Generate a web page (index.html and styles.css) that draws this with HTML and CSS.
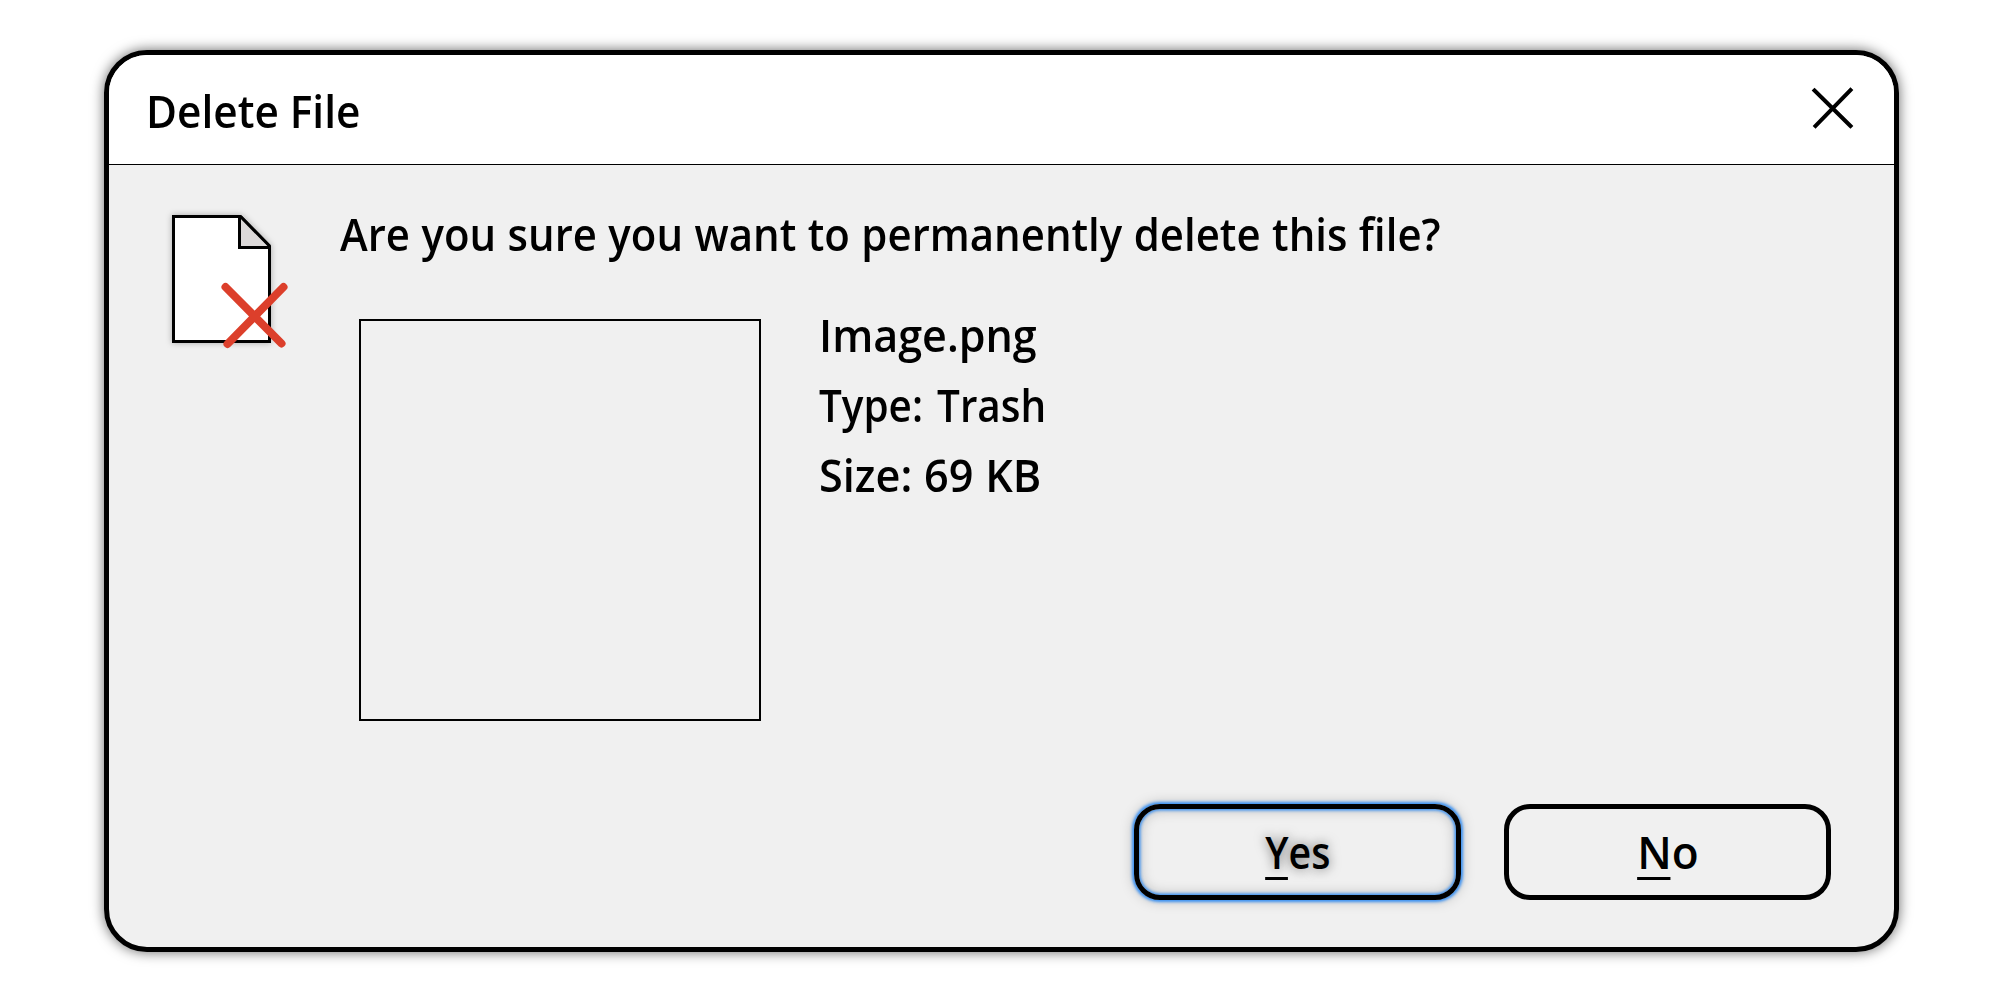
FILE: index.html
```html
<!DOCTYPE html>
<html lang="en">
<head>
<meta charset="utf-8">
<title>Delete File</title>
<link rel="stylesheet" href="styles.css">
</head>
<body>
<main class="dialog">
  <header class="titlebar">
    <h1 class="title"><span>Delete File</span></h1>
    <svg class="close" width="44" height="44" viewBox="0 0 44 44"><path d="M4.500 5.500 40.500 41M40.500 5 5.500 41"/></svg>
  </header>
  <section class="content">
    <svg class="file-icon" width="130" height="150" viewBox="0 0 130 150">
      <path class="sheet" d="M13.500 16.500H80.500L109.500 46V141.500H13.500Z"/>
      <path class="fold" d="M79.500 17V47.500H109.500"/>
      <path class="edge" d="M80.500 16.500 109.500 46"/>
      <path class="cross" d="M65.500 87 121.500 143.500M123.500 87 67.500 144"/>
    </svg>
    <div class="message">
      <p class="question"><span>Are you sure you want to permanently delete this file?</span></p>
      <div class="file">
        <div class="preview"></div>
        <div class="details">
          <p class="name"><span>Image.png</span></p>
          <p class="type"><span>Type: Trash</span></p>
          <p class="size"><span>Size: 69 KB</span></p>
        </div>
      </div>
    </div>
  </section>
  <footer class="actions">
    <button class="button focused"><span class="label label-yes"><span class="key">Y</span>es</span></button>
    <button class="button"><span class="label label-no"><span class="key">N</span>o</span></button>
  </footer>
</main>
</body>
</html>
```
FILE: styles.css
```css
* {
  box-sizing: border-box;
}

body {
  margin: 0;
  height: 1000px;
  padding: 50px 101px 0 104px;
  background: #fff;
  color: #000;
  font: 600 45px "Open Sans", "Noto Sans", sans-serif;
}

h1,
p {
  margin: 0;
  font: inherit;
  line-height: 70px;
  white-space: nowrap;
}

h1 span,
p span {
  display: inline-block;
  transform-origin: left;
}

.dialog {
  display: flex;
  flex-direction: column;
  height: 902px;
  border: 5px solid #000;
  border-radius: 43px;
  background: #f0f0f0;
  box-shadow: 0 0 13px rgba(0, 0, 0, .6);
  overflow: hidden;
}

.titlebar {
  display: flex;
  align-items: flex-start;
  justify-content: space-between;
  height: 110px;
  padding: 21px 40px 0 37px;
  border-bottom: 1px solid #000;
  background: #fff;
}

.title span { transform: scaleX(.941); }
.question span { transform: scaleX(.932); word-spacing: .6px; }
.name span { transform: scaleX(.957); }
.type span { transform: scaleX(.898); word-spacing: 4px; }
.size span { transform: scaleX(.961); word-spacing: .5px; }

.close {
  margin-top: 9px;
  fill: none;
  stroke: #000;
  stroke-width: 4;
  stroke-linecap: square;
}

.content {
  display: flex;
  flex: 1;
  padding: 34px 50px 0 51px;
}

.file-icon {
  margin-top: 1px;
  overflow: visible;
}

.sheet {
  fill: #fff;
  stroke: #000;
  stroke-width: 3;
  filter: drop-shadow(0 0 3px rgba(0, 0, 0, .3));
}

.fold {
  fill: #dcd9d9;
  stroke: #000;
  stroke-width: 3;
}

.edge {
  stroke: #000;
  stroke-width: 3;
}

.cross {
  fill: none;
  stroke: #dc3f2b;
  stroke-width: 8;
  stroke-linecap: round;
}

.message {
  margin-left: 50px;
}

.file {
  display: flex;
  gap: 58px;
  margin: 31px 0 0 19px;
}

.preview {
  width: 402px;
  height: 402px;
  margin-top: 19px;
  border: 2px solid #000;
}

.actions {
  display: flex;
  justify-content: flex-end;
  gap: 43px;
  padding: 0 63px 47px 0;
}

.button {
  width: 327px;
  height: 96px;
  padding: 0;
  border: 5px solid #000;
  border-radius: 26px;
  background: none;
  color: #000;
  font: inherit;
  line-height: 86px;
}

.focused {
  box-shadow: 0 0 3px 1.5px #3a92f5, inset 0 0 3px 1.5px #3a92f5, 0 0 14px rgba(0, 0, 0, .25), inset 0 0 14px rgba(0, 0, 0, .25);
  text-shadow: 0 0 12px rgba(0, 0, 0, .55);
}

.label { display: inline-block; }
.label-yes { transform: translateX(.5px) scaleX(.875); }
.label-no { transform: translateX(.5px) scaleX(.98); }

.key {
  position: relative;
}

.key::after {
  content: "";
  position: absolute;
  left: 0;
  right: 1px;
  bottom: 2px;
  height: 3px;
  background: #000;
}
```
